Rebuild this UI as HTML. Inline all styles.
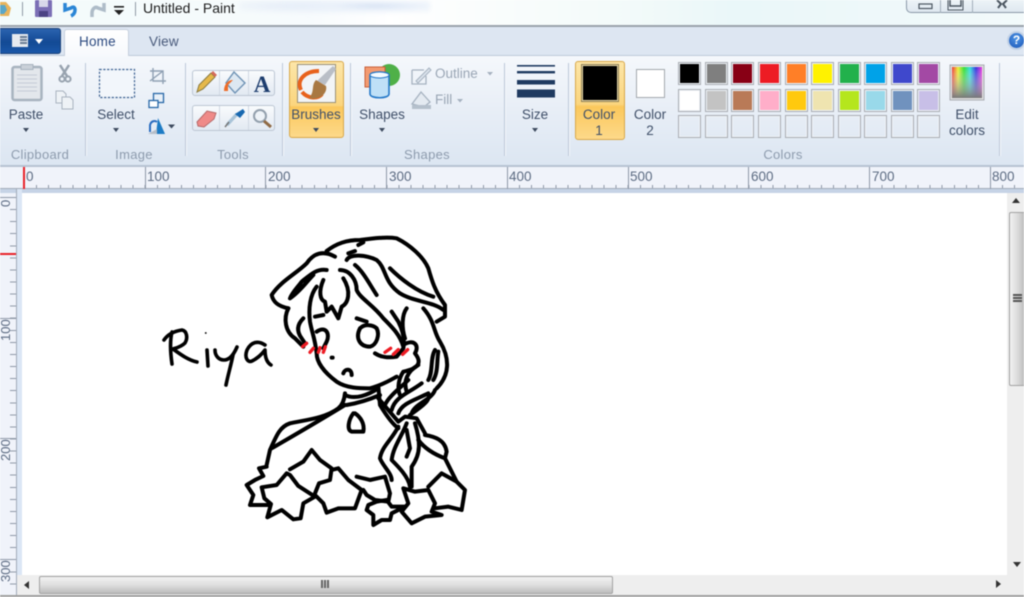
<!DOCTYPE html>
<html><head><meta charset="utf-8"><title>Untitled - Paint</title>
<style>
html,body{margin:0;padding:0;background:#fff}
#w{position:relative;width:1024px;height:597px;overflow:hidden;font-family:"Liberation Sans",sans-serif;background:#fff;filter:blur(.5px)}
#w div,#w span{position:absolute}
.t{font-size:13.5px;color:#3f4f68;white-space:nowrap;text-align:center;line-height:16px;transform:translateX(-50%)}
.g{font-size:13px;color:#8d9bad;white-space:nowrap;line-height:16px;transform:translateX(-50%);letter-spacing:.3px}
.sep{width:1px;top:63px;height:93px;background:#bcc8d8;box-shadow:1px 0 0 #f4f7fb}
.s{width:21px;height:21px;border:1px solid #a9adb3;box-shadow:inset 0 0 0 1px #eef2f7}
.r{font-size:13.5px;color:#5c6b82;line-height:16px;top:169px}
.a{width:0;height:0;border-left:3.5px solid transparent;border-right:3.5px solid transparent;border-top:4px solid #3d4a5e}
.maj{width:1px;top:167px;height:22px;background:#8f99a8}
.lr{font-size:13px;color:#5c6b82;line-height:13px;transform:rotate(-90deg);transform-origin:0 0;left:-1px;white-space:nowrap}
</style></head><body><div id="w">

<div style="left:0;top:0;width:1024px;height:25px;background:linear-gradient(90deg,#f3fbfb 0,#f7fbfd 30%,#fff 38%,#f4fbfa 60%,#eaf7f9 72%,#f3fafb 100%)"></div>
<div style="left:240px;top:0;width:190px;height:16px;background:radial-gradient(ellipse at 135px 6px,#d3dff2 0,#eaf1fa 22%,transparent 60%),radial-gradient(ellipse at 65px 6px,#e1e9f6 0,transparent 55%);filter:blur(2px)"></div>
<div style="left:143px;top:0;font-size:14px;line-height:16px;color:#1d1d1d;white-space:nowrap">Untitled - Paint</div>
<div style="left:22px;top:2px;width:1px;height:14px;background:#8f9aa5"></div>
<div style="left:135px;top:2px;width:1px;height:14px;background:#8f9aa5"></div>
<div style="left:906px;top:-2px;width:118px;height:15px;border:1px solid #8a98a8;border-right:0;border-radius:0 0 0 5px;background:linear-gradient(#eef4f8,#dfe8f0);box-sizing:border-box"></div>
<div style="left:940px;top:0;width:1px;height:13px;background:#a2aeba"></div>
<div style="left:972px;top:0;width:1px;height:13px;background:#a2aeba"></div>

<svg style="position:absolute;left:0;top:0" width="1024" height="30" viewBox="0 0 1024 30">
<path d="M0 2h6l5 6-2 8H0z" fill="#e8b45c"/><path d="M0 5h5l2 5-3 4H0z" fill="#5aa7c8"/>
<rect x="35" y="0" width="17" height="17" rx="1" fill="#7b6fb5"/><rect x="39" y="0" width="9" height="7" fill="#d8d8ea"/><rect x="39" y="11" width="9" height="6" fill="#4b4384"/>
<path d="M65 3 L65 10 L71 8 C74 6 75 8 75 10 C75 13 73 15 71 16" fill="none" stroke="#2b86d6" stroke-width="3.5"/>
<path d="M104 3 L104 10 L98 8 C95 6 92 9 92 13 L92 17" fill="none" stroke="#aebcc8" stroke-width="3.5"/>
<rect x="114" y="6" width="10" height="1.6" fill="#222"/><path d="M114 10h10l-5 5z" fill="#222"/>
<rect x="919" y="4" width="13" height="4.5" fill="none" stroke="#4a5560" stroke-width="1.2"/>
<rect x="950" y="-2" width="11" height="8" fill="none" stroke="#4a5560" stroke-width="1.5"/><rect x="948" y="-2" width="15" height="12" fill="none" stroke="#4a5560" stroke-width="1"/>
<path d="M997 0 L1001 4 L998 8 M1007 0 L1003 4 L1006 8" fill="none" stroke="#4a5560" stroke-width="2"/>
</svg>

<div style="left:0;top:25px;width:1024px;height:2px;background:#9ba3ac"></div>
<div style="left:0;top:27px;width:1024px;height:28px;background:#dde6f2"></div>
<div style="left:0;top:28px;width:61px;height:26px;background:linear-gradient(#2a63b0,#134a95 55%,#1a57a8);border-radius:0 3px 3px 0;border:1px solid #1c4278;border-left:0;box-sizing:border-box"></div>
<div style="left:12px;top:34px;width:16px;height:13px;background:#e6eaf0"></div>
<div style="left:20px;top:36px;width:7px;height:1.5px;background:#6b7d95;box-shadow:0 3px 0 #6b7d95,0 6px 0 #6b7d95"></div>
<div style="left:35px;top:39px;border-left:4.5px solid transparent;border-right:4.5px solid transparent;border-top:5px solid #fff"></div>
<div style="left:64px;top:29px;width:65px;height:27px;background:linear-gradient(#fff,#f7f9fd);border:1px solid #c5cfdc;border-bottom:0;border-radius:3px 3px 0 0;box-sizing:border-box;z-index:2"></div>
<div style="left:79px;top:34px;font-size:13.5px;line-height:16px;color:#2c4a80;z-index:3;letter-spacing:.2px">Home</div>
<div style="left:149px;top:34px;font-size:13.5px;line-height:16px;color:#48597a;letter-spacing:.2px">View</div>
<div style="left:1007px;top:31px;width:19px;height:19px;border-radius:50%;background:radial-gradient(circle at 50% 35%,#4f96e6,#1b55b6);border:2px solid #c3d2e6;box-sizing:border-box;color:#fff;font-weight:bold;font-size:12px;line-height:15px;text-align:center">?</div>

<div style="left:0;top:55px;width:1024px;height:110px;background:linear-gradient(#f5f8fc,#e9eff7 45%,#dce6f2);border-top:1px solid #bfcbda;box-sizing:border-box"></div>
<div style="left:0;top:165px;width:1024px;height:2px;background:#b7c2d2"></div>

<div class="sep" style="left:85px"></div><div class="sep" style="left:185px"></div><div class="sep" style="left:282px"></div>
<div class="sep" style="left:350px"></div><div class="sep" style="left:504px"></div><div class="sep" style="left:568px"></div><div class="sep" style="left:999px"></div>

<div style="left:192px;top:70px;width:83px;height:26px;border:1px solid #bcc6d3;border-radius:3px;background:linear-gradient(#f9fbfd,#e2e9f2);box-sizing:border-box"></div>
<div style="left:192px;top:105px;width:83px;height:26px;border:1px solid #bcc6d3;border-radius:3px;background:linear-gradient(#f9fbfd,#e2e9f2);box-sizing:border-box"></div>
<div style="left:219px;top:71px;width:1px;height:24px;background:#d0d8e3"></div><div style="left:248px;top:71px;width:1px;height:24px;background:#d0d8e3"></div>
<div style="left:219px;top:106px;width:1px;height:24px;background:#d0d8e3"></div><div style="left:248px;top:106px;width:1px;height:24px;background:#d0d8e3"></div>

<div style="left:289px;top:61px;width:55px;height:77px;border:1px solid #d8a84a;border-radius:3px;background:linear-gradient(#fde6a8,#fbd57e 58%,#fbc85c 60%,#fdd98a);box-sizing:border-box"></div>
<div style="left:297px;top:64px;width:39px;height:39px;background:#f2f4f6;border:1px solid #9a9078;box-sizing:border-box"></div>
<div style="left:575px;top:61px;width:50px;height:79px;border:1px solid #d8a84a;border-radius:3px;background:linear-gradient(#fde6a8,#fbd57e 55%,#fbc85c 58%,#fdd98a);box-sizing:border-box"></div>
<div style="left:581px;top:64px;width:38px;height:38px;background:#000;border:1px solid #8f7f55;box-shadow:inset 0 0 0 1px #e8d9aa;box-sizing:border-box"></div>
<div style="left:636px;top:69px;width:29px;height:29px;background:#fff;border:1px solid #a3a8ae;box-sizing:border-box"></div>

<svg style="position:absolute;left:0;top:56px" width="1024" height="110" viewBox="0 56 1024 110">
<defs><linearGradient id="rb" x1="0" x2="1" y1="0" y2="0"><stop offset="0" stop-color="#e33"/><stop offset=".2" stop-color="#ee3"/><stop offset=".4" stop-color="#3d3"/><stop offset=".6" stop-color="#3dd"/><stop offset=".8" stop-color="#33d"/><stop offset="1" stop-color="#e3d"/></linearGradient>
<linearGradient id="fd" x1="0" x2="0" y1="0" y2="1"><stop offset="0" stop-color="#fff" stop-opacity="0"/><stop offset="1" stop-color="#777"/></linearGradient></defs>
<rect x="12.5" y="67" width="29" height="33" rx="2" fill="#e3e7ec" stroke="#a8b3bf" stroke-width="2.5"/>
<rect x="21" y="64.5" width="12" height="5" fill="#c9d0d8" stroke="#a8b3bf"/>
<path d="M17 75h20M17 79h20M17 83h20M17 87h20M17 91h20" stroke="#c5ccd5"/>
<path d="M60 65 L67 76 M69 65 L62 76" stroke="#98a3af" stroke-width="2.5" fill="none"/><circle cx="62" cy="79" r="2.6" fill="none" stroke="#98a3af" stroke-width="2"/><circle cx="68" cy="79" r="2.6" fill="none" stroke="#98a3af" stroke-width="2"/>
<path d="M56 91h7l3 3v9h-10z" fill="#eef2f6" stroke="#a9b3bf"/><path d="M62 97h8l3 3v9h-11z" fill="#eef2f6" stroke="#a9b3bf"/>
<rect x="99.5" y="69.5" width="35" height="28" fill="#f2f6fb" stroke="#3a5f8f" stroke-width="1.2" stroke-dasharray="2.2 1.6"/>
<path d="M153 68v13h13M150 71h13v13M150 81l13-10" fill="none" stroke="#8fa0b3" stroke-width="1.4"/>
<rect x="153.5" y="93.5" width="10" height="9" fill="#e8f0f8" stroke="#2868a8" stroke-width="1.3"/><rect x="149" y="100.5" width="9" height="7" fill="#fff" stroke="#2868a8" stroke-width="1.3"/>
<path d="M150 132 L150 125 C151 121 155 120 157 122" fill="none" stroke="#2a6cc0" stroke-width="2"/><path d="M156 134 L158 118 L165 134z" fill="#1d7bc4"/><path d="M148 134h9v-5z" fill="#b6bec8"/>
<path d="M168 124.5h7l-3.5 4z" fill="#3d4a5e"/>
<path d="M197 92 L199 85 L211 73 L215 77 L203 89z" fill="#e5b84a" stroke="#8a7a3f"/><path d="M211 73 L213 71 L217 75 L215 77z" fill="#d46a5a"/>
<path d="M234 72 L245 83 L235 93 L226 83z" fill="#dde8f2" stroke="#6f93b5" stroke-width="1.4"/><path d="M224 91 C224 84 228 80 233 80 L228 85 L228 91z" fill="#ee6c28"/>
<text x="262" y="92" text-anchor="middle" font-family="'Liberation Serif',serif" font-weight="bold" font-size="23" fill="#1d3d6e">A</text>
<path d="M197 122 L207 111 L216 113 L214 119 L204 127 L198 126z" fill="#ef8a88" stroke="#b66a6a"/>
<path d="M227 125 L237 114" stroke="#a9c4d8" stroke-width="3.4"/><path d="M235 114 L243 109 L245 112 L240 118z" fill="#1868b0"/><path d="M225 127 L229 122" stroke="#777" stroke-width="1.5"/>
<circle cx="260" cy="116" r="6" fill="#eef3f8" stroke="#93a0ad" stroke-width="2"/><path d="M264 121 L271 127" stroke="#8f6a45" stroke-width="3"/>
<path d="M301 90 C296 80 305 71 319 71" fill="none" stroke="#e8621c" stroke-width="4"/><path d="M302 92 C308 99 318 99 322 94" fill="none" stroke="#e8621c" stroke-width="4"/>
<path d="M333 66 L336 69 L325 85 L317 81z" fill="#b9bec6"/><path d="M316 80 L326 86 C328 94 318 101 309 98 C315 92 311 85 316 80z" fill="#a87842"/>
<circle cx="389" cy="75" r="11" fill="#4fb048"/><rect x="365" y="67" width="20" height="20" fill="#f39a70" stroke="#c8603a"/>
<path d="M370 75 C370 71 389 71 389 75 V94 C389 99 370 99 370 94z" fill="#bfe0f7" stroke="#2478c8" stroke-width="1.6"/><ellipse cx="379.5" cy="75" rx="9.5" ry="3" fill="#f3faff" stroke="#2478c8"/>
<path d="M412 70h12M412 70v14h14v-8" fill="none" stroke="#a6b2c0" stroke-width="1.3"/><path d="M416 81 L429 68 L431 70 L418 83z" fill="#dbe3ec" stroke="#a6b2c0"/>
<path d="M412 104 L421 92 L430 102 L424 107z" fill="#e4eaf1" stroke="#a6b2c0" stroke-width="1.3"/><rect x="412" y="105" width="19" height="4" fill="#b5c0cc"/>
<path d="M487 72h6l-3 3.5zM457 99h6l-3 3.5z" fill="#a6b2c0"/>
<rect x="517" y="65" width="38" height="1.6" fill="#1f3a60"/><rect x="517" y="71" width="38" height="2.4" fill="#1f3a60"/><rect x="517" y="80" width="38" height="4.5" fill="#1f3a60"/><rect x="517" y="89.5" width="38" height="8" fill="#1f3a60"/>
<rect x="950" y="65" width="34" height="35" fill="#ddd" stroke="#a9adb3"/><rect x="952" y="67" width="30" height="31" fill="url(#rb)"/><rect x="952" y="67" width="30" height="31" fill="url(#fd)"/>
</svg>

<div class="s" style="left:678px;top:62px;background:#000"></div><div class="s" style="left:704.5px;top:62px;background:#7f7f7f"></div><div class="s" style="left:731px;top:62px;background:#880015"></div><div class="s" style="left:757.5px;top:62px;background:#ed1c24"></div><div class="s" style="left:784.5px;top:62px;background:#ff7f27"></div><div class="s" style="left:811px;top:62px;background:#fff200"></div><div class="s" style="left:837.5px;top:62px;background:#22b14c"></div><div class="s" style="left:864px;top:62px;background:#00a2e8"></div><div class="s" style="left:890.5px;top:62px;background:#3f48cc"></div><div class="s" style="left:917px;top:62px;background:#a349a4"></div>
<div class="s" style="left:678px;top:88.5px;background:#fff"></div><div class="s" style="left:704.5px;top:88.5px;background:#c3c3c3"></div><div class="s" style="left:731px;top:88.5px;background:#b97a57"></div><div class="s" style="left:757.5px;top:88.5px;background:#ffaec9"></div><div class="s" style="left:784.5px;top:88.5px;background:#ffc90e"></div><div class="s" style="left:811px;top:88.5px;background:#efe4b0"></div><div class="s" style="left:837.5px;top:88.5px;background:#b5e61d"></div><div class="s" style="left:864px;top:88.5px;background:#99d9ea"></div><div class="s" style="left:890.5px;top:88.5px;background:#7092be"></div><div class="s" style="left:917px;top:88.5px;background:#c8bfe7"></div>
<div class="s" style="left:678px;top:115px"></div><div class="s" style="left:704.5px;top:115px"></div><div class="s" style="left:731px;top:115px"></div><div class="s" style="left:757.5px;top:115px"></div><div class="s" style="left:784.5px;top:115px"></div><div class="s" style="left:811px;top:115px"></div><div class="s" style="left:837.5px;top:115px"></div><div class="s" style="left:864px;top:115px"></div><div class="s" style="left:890.5px;top:115px"></div><div class="s" style="left:917px;top:115px"></div>

<div class="t" style="left:26px;top:107px">Paste</div><div class="a" style="left:22.5px;top:128px"></div>
<div class="t" style="left:116px;top:107px">Select</div><div class="a" style="left:112.5px;top:128px"></div>
<div class="t" style="left:316px;top:107px">Brushes</div><div class="a" style="left:312.5px;top:128px"></div>
<div class="t" style="left:382px;top:107px">Shapes</div><div class="a" style="left:378.5px;top:128px"></div>
<div class="t" style="left:535px;top:107px">Size</div><div class="a" style="left:531.5px;top:128px"></div>
<div class="t" style="left:599px;top:107px">Color</div><div class="t" style="left:599px;top:123px">1</div>
<div class="t" style="left:650px;top:107px">Color</div><div class="t" style="left:650px;top:123px">2</div>
<div class="t" style="left:967px;top:107px">Edit</div><div class="t" style="left:967px;top:123px">colors</div>
<div style="left:435px;top:66px;font-size:13.5px;line-height:16px;color:#9aa6b5">Outline</div>
<div style="left:435px;top:92px;font-size:13.5px;line-height:16px;color:#9aa6b5">Fill</div>
<div class="g" style="left:40px;top:147px">Clipboard</div><div class="g" style="left:134px;top:147px">Image</div><div class="g" style="left:233px;top:147px">Tools</div>
<div class="g" style="left:427px;top:147px">Shapes</div><div class="g" style="left:783px;top:147px">Colors</div>

<div style="left:0;top:167px;width:1024px;height:23px;background:#f0f3fa"></div>
<div style="left:23.5px;top:185px;width:1000.5px;height:3px;background:repeating-linear-gradient(90deg,#8f99a8 0,#8f99a8 1px,transparent 1px,transparent 12.075px)"></div>
<div style="left:0;top:188px;width:1024px;height:1px;background:#a3acb9"></div>
<div style="left:23px;top:167px;width:1.5px;height:22px;background:#e8222a"></div>
<div class="maj" style="left:144.5px"></div><div class="maj" style="left:265px"></div><div class="maj" style="left:386px"></div><div class="maj" style="left:506.5px"></div><div class="maj" style="left:627.5px"></div><div class="maj" style="left:748px"></div><div class="maj" style="left:869px"></div><div class="maj" style="left:989.5px"></div>
<div class="r" style="left:26px">0</div><div class="r" style="left:147px">100</div><div class="r" style="left:268px">200</div><div class="r" style="left:389px">300</div><div class="r" style="left:509px">400</div><div class="r" style="left:630px">500</div><div class="r" style="left:751px">600</div><div class="r" style="left:872px">700</div><div class="r" style="left:992px">800</div>
<div style="left:0;top:189px;width:1024px;height:4px;background:#c6d3e6"></div>

<div style="left:0;top:193px;width:16px;height:404px;background:#f0f3fa"></div>
<div style="left:16px;top:189px;width:6px;height:408px;background:#dbe6f5;border-left:1px solid #a3acb9;box-sizing:border-box"></div>
<div style="left:10px;top:197px;width:6px;height:398px;background:repeating-linear-gradient(180deg,#8f99a8 0,#8f99a8 1px,transparent 1px,transparent 12.075px)"></div>
<div style="left:0;top:197px;width:16px;height:1px;background:#8f99a8"></div>
<div style="left:0;top:318px;width:16px;height:1px;background:#8f99a8"></div>
<div style="left:0;top:438px;width:16px;height:1px;background:#8f99a8"></div>
<div style="left:0;top:559px;width:16px;height:1px;background:#8f99a8"></div>
<div style="left:0;top:253px;width:16px;height:1.5px;background:#e8222a"></div>
<div class="lr" style="top:207px">0</div><div class="lr" style="top:341px">100</div><div class="lr" style="top:461px">200</div><div class="lr" style="top:582px">300</div>

<div style="left:1007px;top:193px;width:17px;height:383px;background:#eeeeee"></div>
<div style="left:1009px;top:212px;width:15px;height:174px;background:linear-gradient(90deg,#f2f2f2,#d8d8d8 60%,#bdbdbd);border:1px solid #a3a3a3;border-right:0;border-radius:2px 0 0 2px;box-sizing:border-box"></div>
<div style="left:1013px;top:294px;width:9px;height:1.5px;background:#555;box-shadow:0 3px 0 #555,0 6px 0 #555"></div>
<div style="left:1012px;top:198px;border-left:4px solid transparent;border-right:4px solid transparent;border-bottom:5px solid #333"></div>
<div style="left:1013px;top:562px;border-left:4px solid transparent;border-right:4px solid transparent;border-top:5px solid #333"></div>
<div style="left:17px;top:575px;width:1007px;height:20px;background:#eeeeee"></div>
<div style="left:39px;top:576px;width:574px;height:18px;background:linear-gradient(#f2f2f2,#dedede 50%,#bdbdbd);border:1px solid #a3a3a3;border-radius:2px;box-sizing:border-box"></div>
<div style="left:321px;top:580px;width:1.5px;height:8px;background:#666;box-shadow:3px 0 0 #666,6px 0 0 #666"></div>
<div style="left:24px;top:581px;border-top:4px solid transparent;border-bottom:4px solid transparent;border-right:5px solid #333"></div>
<div style="left:996px;top:580px;border-top:4px solid transparent;border-bottom:4px solid transparent;border-left:5px solid #333"></div>
<div style="left:0;top:595px;width:1024px;height:2px;background:#a0a0a0"></div>

<svg style="position:absolute;left:0;top:0" width="1024" height="597" viewBox="0 0 1024 597">
<g fill="none" stroke="#000" stroke-width="3.6" stroke-linecap="round" stroke-linejoin="round">
<path d="M172 332 C170 340 170 350 172 364"/>
<path d="M164 340 C168 334 175 331 182 330 C187 331 188 338 185 343 C181 347 176 348 173 349 C180 354 188 360 197 362"/>
<path d="M207 350 L208 366"/>
<path d="M215 350 C215 356 219 360 224 360 C230 360 234 354 237 347"/>
<path d="M233 355 C231 365 228 375 226 385"/>
<path d="M265 345 C258 340 251 342 247 350 C244 358 248 363 252 361 C258 358 262 354 265 350 C265 356 266 362 271 365"/>
<path d="M205.7 333h.1" stroke-width="1.8"/>
</g>
<g transform="translate(260 225) scale(.3333)" fill="none" stroke="#000" stroke-width="12" stroke-linecap="round" stroke-linejoin="round">
<path d="M200,78 C230,55 260,45 300,45 C340,40 380,35 410,40 C450,60 490,95 505,130 C515,165 525,200 555,240 L555,275 L530,290"/>
<path d="M225,95 C190,75 160,85 140,115 C110,145 60,170 35,210 C40,235 60,245 85,250"/>
<path d="M200,135 C170,130 150,150 125,170 C110,190 95,205 90,220 C120,200 140,170 160,150"/>
<path d="M85,250 C70,280 75,320 105,340 L130,365"/>
<path d="M130,280 C110,300 110,320 125,340 L135,355"/>
<path d="M170,185 C150,210 145,250 150,290 C155,320 165,340 170,385 C170,410 190,440 230,470 C260,490 300,490 330,490 C370,480 400,460 410,455"/>
<path d="M190,165 C175,200 180,225 195,230 L200,260 L215,245 L235,280 L245,245 C265,235 275,200 250,160"/>
<path d="M240,135 C270,135 290,165 290,195 C300,220 340,240 370,280 C400,310 420,330 430,365"/>
<path d="M285,120 C310,140 330,180 350,210"/>
<path d="M260,105 C270,85 320,90 350,105 C380,130 370,170 420,205 C460,230 520,230 550,255"/>
<path d="M390,130 C420,160 470,200 520,215"/>
<path d="M265,85 L285,78 M295,60 L310,52"/>
<path d="M290,280 L320,290"/>
<path d="M300,310 C285,340 300,365 330,365 C350,360 360,330 350,310 C340,300 315,295 300,310"/>
<path d="M165,275 L190,270"/>
<path d="M170,320 C200,300 210,330 200,350 L190,370"/>
<path d="M215,398 h3"/>
<path d="M250,445 C255,430 275,430 275,450"/>
<path d="M395,260 L415,290 C430,320 435,345 430,370 L410,395 C380,400 360,395 345,385"/>
<path d="M440,250 C425,270 425,310 435,340"/>
<path d="M430,360 C460,340 480,360 465,385 C485,410 480,430 430,440 C410,470 415,500 420,510"/>
<path d="M490,250 C525,290 520,320 540,350 C570,400 570,450 530,490"/>
<path d="M525,375 C510,400 520,440 505,465 M535,380 C530,410 535,440 520,465"/>
<path d="M475,420 C440,440 430,470 440,500"/>
<g stroke="#ed1c24" stroke-width="10">
<path d="M128,365 L140,355 M150,382 L160,370 M175,382 L180,368 M190,382 L196,365 M375,382 L392,370 M400,388 L415,374 M428,388 L443,374"/>
</g>
</g>
<g transform="translate(235 380) scale(.3333)" fill="none" stroke="#000" stroke-width="12" stroke-linecap="round" stroke-linejoin="round">
<path d="M330,40 C328,60 322,75 310,85 C270,115 210,120 165,130 C135,140 125,165 105,210 L95,255"/>
<path d="M110,205 C170,170 240,130 330,75"/>
<path d="M330,45 C360,60 400,45 430,25 M335,75 C365,70 400,60 435,45"/>
<path d="M430,20 L435,75 C450,100 470,130 490,145"/>
<path d="M355,100 C340,120 335,150 350,155 L385,155 C390,130 375,110 360,100"/>
<path d="M450,75 C460,50 500,20 520,0 M470,90 C480,50 520,40 560,10 M530,100 C540,70 590,60 600,30 M490,100 C500,70 540,60 580,40 C590,60 560,80 525,105"/>
<path d="M430,55 L490,125 L510,110 L545,115 L570,160"/>
<path d="M490,140 C470,180 440,200 435,235 C445,260 470,280 470,300"/>
<path d="M515,130 C500,170 475,200 470,240 C490,260 520,290 525,320"/>
<path d="M515,150 L525,205 L515,230"/>
<path d="M540,130 C555,180 560,220 530,260 L530,320"/>
<path d="M570,165 C600,170 630,180 635,215 L630,235 C590,220 565,200 550,180 M630,235 L665,305"/>
<path d="M95,260 L72,265 L85,288 L60,300 L35,315 L55,345 L45,375 L100,375"/>
<path d="M155,280 L125,315 L80,322 L88,355 L108,372 L97,412 L140,390 L175,418 L197,415 L205,370 L240,350 L190,318 L165,285 Z"/>
<path d="M165,268 L205,245 L230,210 L255,240 L290,265 L285,300 L252,310 L240,340"/>
<path d="M290,270 L310,265 L340,300 L380,330 L360,385 L310,385 L275,398 L265,370 L240,345"/>
<path d="M365,290 L405,300 L450,290 L465,340 L460,365 L420,360 L395,345 L385,330"/>
<path d="M400,375 L425,365 L455,360 L470,380 L510,380 L470,400 L465,420 L440,420 L415,435 L415,405 L395,390 Z"/>
<path d="M505,325 L540,335 L580,330 L600,370 L590,395 L620,405 L570,410 L530,430 L500,395 L520,370 Z"/>
<path d="M580,320 L620,280 L665,305 L690,330 L680,390 L640,380 L600,385"/>
</g>
</svg>
</div></body></html>
